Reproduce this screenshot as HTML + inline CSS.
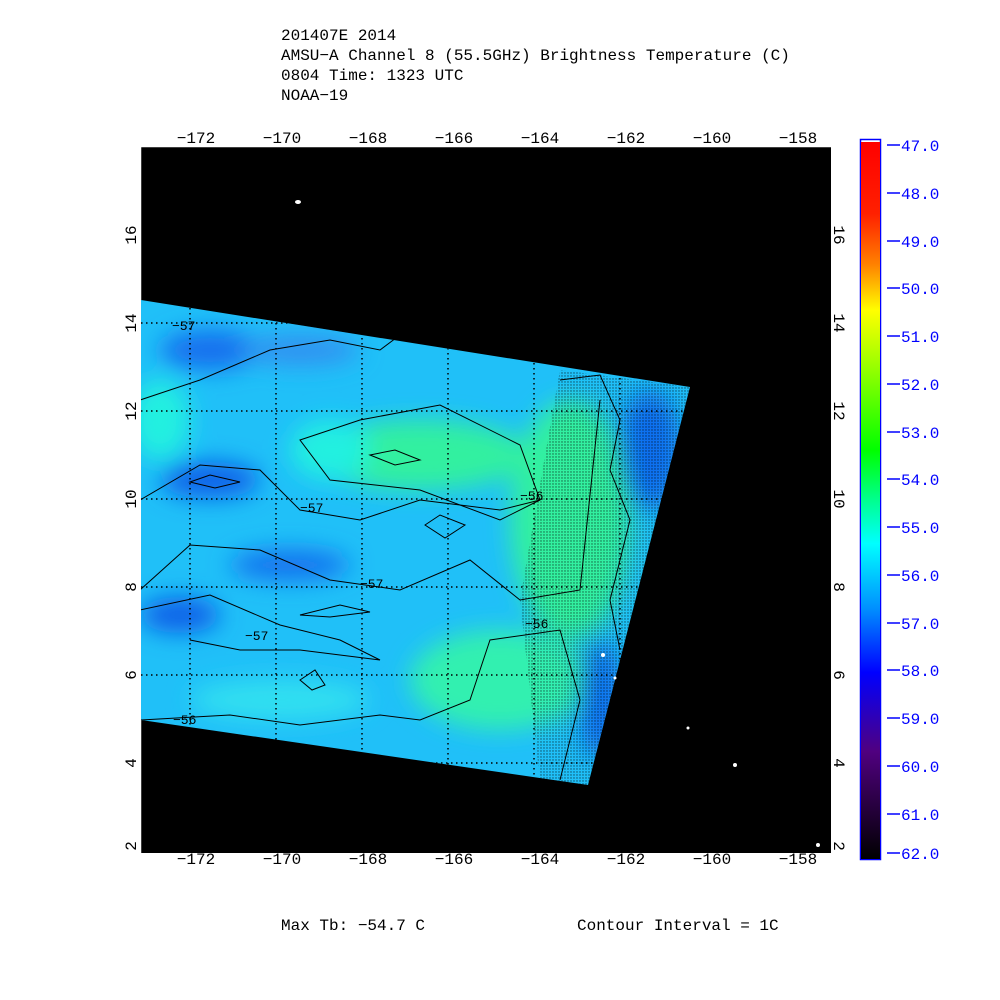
<!DOCTYPE html>
<html><head><meta charset="utf-8"><style>
html,body{margin:0;padding:0;background:#fff;}
svg{display:block}
text{font-family:"Liberation Mono","DejaVu Sans Mono",monospace;}
</style></head><body>
<svg width="1000" height="1000" viewBox="0 0 1000 1000" xmlns="http://www.w3.org/2000/svg">
<defs>
<linearGradient id="cb" x1="0" y1="0" x2="0" y2="1">
<stop offset="0" stop-color="#ff0000"/>
<stop offset="0.1" stop-color="#ff2000"/>
<stop offset="0.17" stop-color="#ff8000"/>
<stop offset="0.235" stop-color="#ffff00"/>
<stop offset="0.43" stop-color="#00ff00"/>
<stop offset="0.5" stop-color="#00ff90"/>
<stop offset="0.56" stop-color="#00ffff"/>
<stop offset="0.65" stop-color="#0090ff"/>
<stop offset="0.74" stop-color="#0000ff"/>
<stop offset="0.85" stop-color="#500080"/>
<stop offset="1" stop-color="#000000"/>
</linearGradient>
<filter id="bl"><feGaussianBlur stdDeviation="12"/></filter>
<clipPath id="sw"><polygon points="141,300 690,387 588,785 141,720"/></clipPath>
<pattern id="dots" width="3" height="3" patternUnits="userSpaceOnUse"><circle cx="1" cy="1" r="0.7" fill="#000"/></pattern>
</defs>
<g font-size="16" fill="#000">
<text x="281" y="40">201407E 2014</text>
<text x="281" y="60">AMSU−A Channel 8 (55.5GHz) Brightness Temperature (C)</text>
<text x="281" y="80">0804 Time: 1323 UTC</text>
<text x="281" y="100">NOAA−19</text>
<text x="281" y="930">Max Tb: −54.7    C</text>
<text x="577" y="930">Contour Interval = 1C</text>
</g>
<rect x="140" y="146" width="691" height="707" fill="#000"/>
<path d="M140.5,853 V146.5 H831" stroke="#fff" stroke-width="1.5" fill="none"/>
<g clip-path="url(#sw)">
<rect x="140" y="290" width="560" height="500" fill="#20c0f8"/>
<g filter="url(#bl)">
<ellipse cx="420" cy="455" rx="110" ry="35" fill="#30f0a0"/>
<ellipse cx="570" cy="520" rx="60" ry="120" fill="#30f0a0"/>
<ellipse cx="500" cy="680" rx="90" ry="50" fill="#30f0b0"/>
<ellipse cx="160" cy="420" rx="30" ry="40" fill="#20f0e0"/>
<ellipse cx="330" cy="450" rx="40" ry="30" fill="#20f0e0"/>
<ellipse cx="210" cy="480" rx="50" ry="18" fill="#1060e8"/>
<ellipse cx="290" cy="565" rx="60" ry="15" fill="#1870ee"/>
<ellipse cx="180" cy="615" rx="40" ry="18" fill="#1060e8"/>
<ellipse cx="210" cy="350" rx="50" ry="20" fill="#1870ee"/>
<ellipse cx="300" cy="350" rx="60" ry="15" fill="#3090f0"/>
<ellipse cx="650" cy="450" rx="30" ry="60" fill="#1070f0"/>
<ellipse cx="600" cy="700" rx="20" ry="60" fill="#1070f0"/>
<ellipse cx="280" cy="700" rx="90" ry="20" fill="#30e0f0"/>
</g>
<polygon points="560,370 690,387 588,785 540,780 520,600" fill="url(#dots)" opacity="0.6"/>
<g fill="none" stroke="#000" stroke-width="1">
<path d="M300,440 L360,420 L440,405 L520,445 L540,500 L500,520 L420,490 L330,480 Z"/>
<path d="M140,500 L200,465 L260,470 L300,510 L360,520 L420,500 L500,510 L540,500"/>
<path d="M140,590 L190,545 L260,550 L330,580 L400,590 L470,560 L520,600 L580,590 L600,400"/>
<path d="M140,610 L210,595 L280,625 L340,640 L380,660 L300,650 L240,650 L190,640"/>
<path d="M140,720 L230,715 L300,725 L380,715 L420,720 L470,700 L490,640 L560,630 L580,700 L560,780"/>
<path d="M140,400 L200,380 L270,350 L330,340 L380,350 L400,335"/>
<path d="M370,455 L395,450 L420,460 L395,465 Z"/>
<path d="M190,482 L210,475 L240,482 L215,488 Z"/>
<path d="M425,525 L440,515 L465,525 L445,538 Z"/>
<path d="M300,615 L340,605 L370,612 L330,617 Z"/>
<path d="M300,680 L315,670 L325,685 L312,690 Z"/>
<path d="M560,380 L600,375 L620,420 L610,470 L630,520 L610,600 L620,650"/>
</g>
<g font-size="13" fill="#000"><text x="300" y="512">−57</text><text x="520" y="500">−56</text><text x="360" y="588">−57</text><text x="245" y="640">−57</text><text x="525" y="628">−56</text><text x="173" y="724">−56</text><text x="172" y="330">−57</text></g>
<g stroke="#000" stroke-dasharray="1.5,3.5" stroke-width="1.5">
<line x1="190" y1="148" x2="190" y2="852"/><line x1="276" y1="148" x2="276" y2="852"/><line x1="362" y1="148" x2="362" y2="852"/><line x1="448" y1="148" x2="448" y2="852"/><line x1="534" y1="148" x2="534" y2="852"/><line x1="620" y1="148" x2="620" y2="852"/>
<line x1="141" y1="323" x2="830" y2="323"/><line x1="141" y1="411" x2="830" y2="411"/><line x1="141" y1="499" x2="830" y2="499"/><line x1="141" y1="587" x2="830" y2="587"/><line x1="141" y1="675" x2="830" y2="675"/><line x1="141" y1="763" x2="830" y2="763"/>
</g>
</g>
<g fill="#fff"><ellipse cx="298" cy="202" rx="3" ry="2"/><circle cx="688" cy="728" r="1.5"/><circle cx="735" cy="765" r="2"/><circle cx="615" cy="678" r="1.5"/><circle cx="603" cy="655" r="2"/><circle cx="818" cy="845" r="2"/></g>
<g font-size="16" fill="#000" text-anchor="middle">
<text x="196" y="143">−172</text><text x="282" y="143">−170</text><text x="368" y="143">−168</text><text x="454" y="143">−166</text><text x="540" y="143">−164</text><text x="626" y="143">−162</text><text x="712" y="143">−160</text><text x="798" y="143">−158</text>
<text x="196" y="864">−172</text><text x="282" y="864">−170</text><text x="368" y="864">−168</text><text x="454" y="864">−166</text><text x="540" y="864">−164</text><text x="626" y="864">−162</text><text x="712" y="864">−160</text><text x="798" y="864">−158</text>
</g>
<g font-size="16" fill="#000" text-anchor="middle">
<text transform="translate(136,235) rotate(-90)">16</text><text transform="translate(136,323) rotate(-90)">14</text><text transform="translate(136,411) rotate(-90)">12</text><text transform="translate(136,499) rotate(-90)">10</text><text transform="translate(136,587) rotate(-90)">8</text><text transform="translate(136,675) rotate(-90)">6</text><text transform="translate(136,763) rotate(-90)">4</text><text transform="translate(136,846) rotate(-90)">2</text>
<text transform="translate(834,235) rotate(90)">16</text><text transform="translate(834,323) rotate(90)">14</text><text transform="translate(834,411) rotate(90)">12</text><text transform="translate(834,499) rotate(90)">10</text><text transform="translate(834,587) rotate(90)">8</text><text transform="translate(834,675) rotate(90)">6</text><text transform="translate(834,763) rotate(90)">4</text><text transform="translate(834,846) rotate(90)">2</text>
</g>
<rect x="860.5" y="139.5" width="20" height="720" fill="#fff" stroke="#00f" stroke-width="1.5"/>
<rect x="861" y="142" width="19" height="717" fill="url(#cb)"/>
<g stroke="#00f" stroke-width="1.5">
<line x1="887" y1="145" x2="900" y2="145"/><line x1="887" y1="193" x2="900" y2="193"/><line x1="887" y1="241" x2="900" y2="241"/><line x1="887" y1="288" x2="900" y2="288"/><line x1="887" y1="336" x2="900" y2="336"/><line x1="887" y1="384" x2="900" y2="384"/><line x1="887" y1="432" x2="900" y2="432"/><line x1="887" y1="479" x2="900" y2="479"/><line x1="887" y1="527" x2="900" y2="527"/><line x1="887" y1="575" x2="900" y2="575"/><line x1="887" y1="623" x2="900" y2="623"/><line x1="887" y1="670" x2="900" y2="670"/><line x1="887" y1="718" x2="900" y2="718"/><line x1="887" y1="766" x2="900" y2="766"/><line x1="887" y1="814" x2="900" y2="814"/><line x1="887" y1="853" x2="900" y2="853"/>
</g>
<g font-size="16" fill="#00f">
<text x="901" y="151">47.0</text><text x="901" y="199">48.0</text><text x="901" y="247">49.0</text><text x="901" y="294">50.0</text><text x="901" y="342">51.0</text><text x="901" y="390">52.0</text><text x="901" y="438">53.0</text><text x="901" y="485">54.0</text><text x="901" y="533">55.0</text><text x="901" y="581">56.0</text><text x="901" y="629">57.0</text><text x="901" y="676">58.0</text><text x="901" y="724">59.0</text><text x="901" y="772">60.0</text><text x="901" y="820">61.0</text><text x="901" y="859">62.0</text>
</g>
</svg>
</body></html>
